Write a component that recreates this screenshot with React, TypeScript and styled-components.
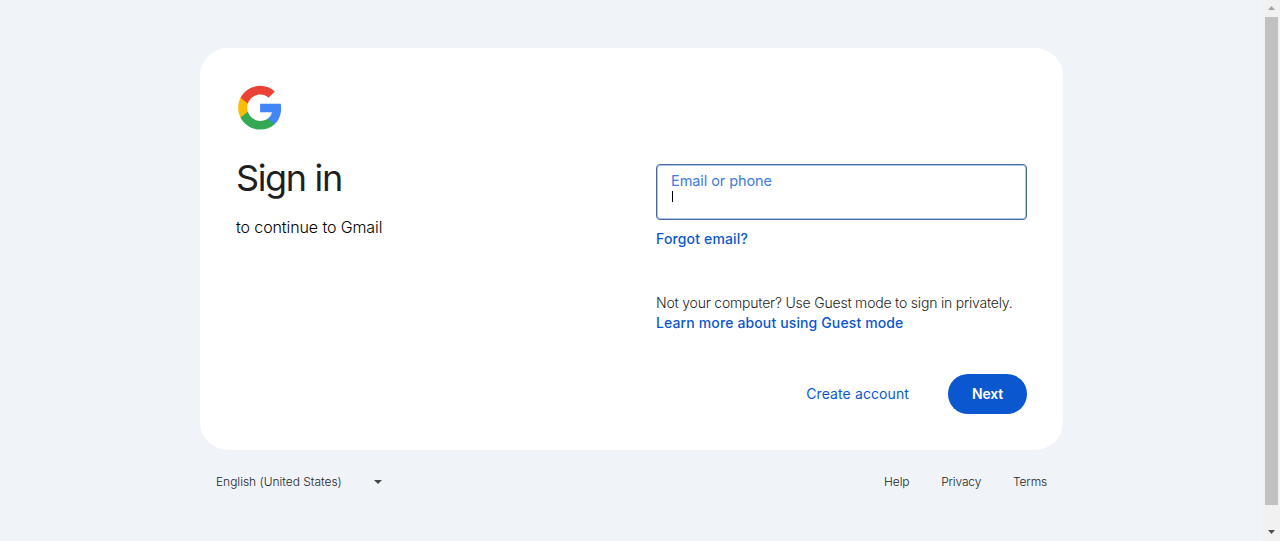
import React from "react";
import styled, { createGlobalStyle } from "styled-components";

const GlobalStyle = createGlobalStyle`
  * { box-sizing: border-box; }
  html, body { margin: 0; height: 541px; overflow: hidden; }
  body { background: #f0f4f9; font-family: Inter, Roboto, "Liberation Sans", sans-serif; color: #1f1f1f; }
`;

const Page = styled.div`
  display: flex;
  width: 1280px;
  height: 541px;
`;

const Content = styled.div`
  width: 1263px;
  padding: 48px 200px 0;
`;

const Card = styled.main`
  display: flex;
  flex-direction: column;
  height: 402px;
  padding: 36px;
  border-radius: 28px;
  background: #fff;
`;

const Logo = styled.svg`
  display: block;
  width: 48px;
  height: 48px;
`;

const Columns = styled.div`
  display: flex;
  justify-content: space-between;
`;

const Intro = styled.div`
  padding-top: 24px;
`;

const Title = styled.h1`
  margin: 0;
  font-size: 36px;
  font-weight: 400;
  line-height: 46px;
  letter-spacing: -1.35px;
`;

const Subtitle = styled.p`
  margin: 14px 0 0;
  font-size: 16px;
  font-weight: 300;
  line-height: 24px;
  letter-spacing: -0.1px;
  color: #000;
`;

const Form = styled.form`
  display: flex;
  flex-direction: column;
  align-items: flex-start;
  width: 371px;
  padding-top: 32px;
`;

const Field = styled.div`
  width: 371px;
  height: 56px;
  margin-top: 1px;
  padding: 7px 14px;
  border: 1px solid #4a6a9b;
  border-radius: 4px;
  box-shadow: inset 0 0 0 1px #a9c4ee;
`;

const FieldLabel = styled.label`
  display: block;
  height: 19px;
  font-size: 14.5px;
  line-height: 18px;
  letter-spacing: -0.08px;
  color: #3f7be0;
`;

const Caret = styled.div`
  width: 1px;
  height: 11px;
  margin: 0 0 0 1px;
  background: #000;
`;

const TextLink = styled.a<{ $spacing: number; $weight?: number }>`
  font-size: 14px;
  font-weight: ${(p) => p.$weight ?? 500};
  line-height: 20px;
  letter-spacing: ${(p) => p.$spacing}px;
  white-space: nowrap;
  color: #0b57d0;
`;

const Forgot = styled.div`
  padding-top: 8px;
  line-height: 20px;
`;

const Guest = styled.div`
  display: flex;
  flex-direction: column;
  margin-top: 44px;
`;

const GuestText = styled.span`
  font-size: 14px;
  font-weight: 300;
  line-height: 20px;
  letter-spacing: -0.2px;
  white-space: nowrap;
  color: #242625;
`;

const Actions = styled.div`
  display: flex;
  align-items: center;
  align-self: flex-end;
  gap: 39px;
  margin-top: 41px;
`;

const NextButton = styled.button`
  width: 79px;
  height: 40px;
  padding: 0;
  border: 0;
  border-radius: 20px;
  background: #0b57d0;
  color: #fff;
  font: 600 14px/20px Inter, Roboto, sans-serif;
  letter-spacing: -0.2px;
`;

const Footer = styled.footer`
  display: flex;
  align-items: center;
  justify-content: space-between;
  padding: 24px 16px 0;
  font-size: 12px;
  font-weight: 300;
  line-height: 16px;
  color: #242625;
`;

const Language = styled.div`
  display: flex;
  align-items: center;
  justify-content: space-between;
  width: 166px;
  letter-spacing: -0.02px;
`;

const Arrow = styled.svg`
  display: block;
  width: 8px;
  height: 4px;
`;

const FooterLinks = styled.nav`
  display: flex;
  gap: 31.8px;
`;

const FooterLink = styled.a`
  letter-spacing: -0.15px;
`;

const Scrollbar = styled.div`
  display: flex;
  flex-direction: column;
  align-items: center;
  width: 17px;
  height: 541px;
  background: #f1f1f1;
`;

const ScrollEnd = styled.div`
  display: flex;
  align-items: center;
  justify-content: center;
  width: 17px;
  height: 17px;
  padding-bottom: 1px;
`;

const Thumb = styled.div`
  width: 13px;
  height: 488px;
  margin-bottom: auto;
  background: #c1c1c1;
`;

const ScrollArrow = styled.svg`
  display: block;
  width: 7px;
  height: 4px;
`;

export default function App() {
  return (
    <Page>
      <GlobalStyle />
      <Content>
        <Card>
          <Logo viewBox="0.3 0.2 47.2 47.2">
            <path fill="#4285F4" d="M45.12 24.5c0-1.56-.14-3.06-.4-4.5H24v8.51h11.84c-.51 2.75-2.06 5.08-4.39 6.64v5.52h7.11c4.16-3.83 6.56-9.47 6.56-16.17z" />
            <path fill="#34A853" d="M24 46c5.94 0 10.92-1.97 14.56-5.33l-7.11-5.52c-1.97 1.32-4.49 2.1-7.45 2.1-5.73 0-10.58-3.87-12.31-9.07H4.34v5.7C7.96 41.07 15.4 46 24 46z" />
            <path fill="#FBBC05" d="M11.69 28.18C11.25 26.86 11 25.45 11 24s.25-2.86.69-4.18v-5.7H4.34C2.85 17.09 2 20.45 2 24c0 3.55.85 6.91 2.34 9.88l7.35-5.7z" />
            <path fill="#EA4335" d="M24 10.75c3.23 0 6.13 1.11 8.41 3.29l6.31-6.31C34.91 4.18 29.93 2 24 2 15.4 2 7.96 6.93 4.34 14.12l7.35 5.7c1.73-5.2 6.58-9.07 12.31-9.07z" />
          </Logo>
          <Columns>
            <Intro>
              <Title>Sign in</Title>
              <Subtitle>to continue to Gmail</Subtitle>
            </Intro>
            <Form>
              <Field>
                <FieldLabel>Email or phone</FieldLabel>
                <Caret />
              </Field>
              <Forgot>
                <TextLink $spacing={0.15}>Forgot email?</TextLink>
              </Forgot>
              <Guest>
                <GuestText>Not your computer? Use Guest mode to sign in privately.</GuestText>
                <TextLink $spacing={0.13}>Learn more about using Guest mode</TextLink>
              </Guest>
              <Actions>
                <TextLink $spacing={0.1} $weight={400}>Create account</TextLink>
                <NextButton type="button">Next</NextButton>
              </Actions>
            </Form>
          </Columns>
        </Card>
        <Footer>
          <Language>
            English (United States)
            <Arrow viewBox="0 0 8 4"><path d="M0 0h8L4 4z" fill="#444746" /></Arrow>
          </Language>
          <FooterLinks>
            <FooterLink>Help</FooterLink>
            <FooterLink>Privacy</FooterLink>
            <FooterLink>Terms</FooterLink>
          </FooterLinks>
        </Footer>
      </Content>
      <Scrollbar>
        <ScrollEnd>
          <ScrollArrow viewBox="0 0 7 4"><path d="M0 4h7L3.5 0z" fill="#a3a3a3" /></ScrollArrow>
        </ScrollEnd>
        <Thumb />
        <ScrollEnd>
          <ScrollArrow viewBox="0 0 7 4"><path d="M0 0h7L3.5 4z" fill="#505050" /></ScrollArrow>
        </ScrollEnd>
      </Scrollbar>
    </Page>
  );
}
